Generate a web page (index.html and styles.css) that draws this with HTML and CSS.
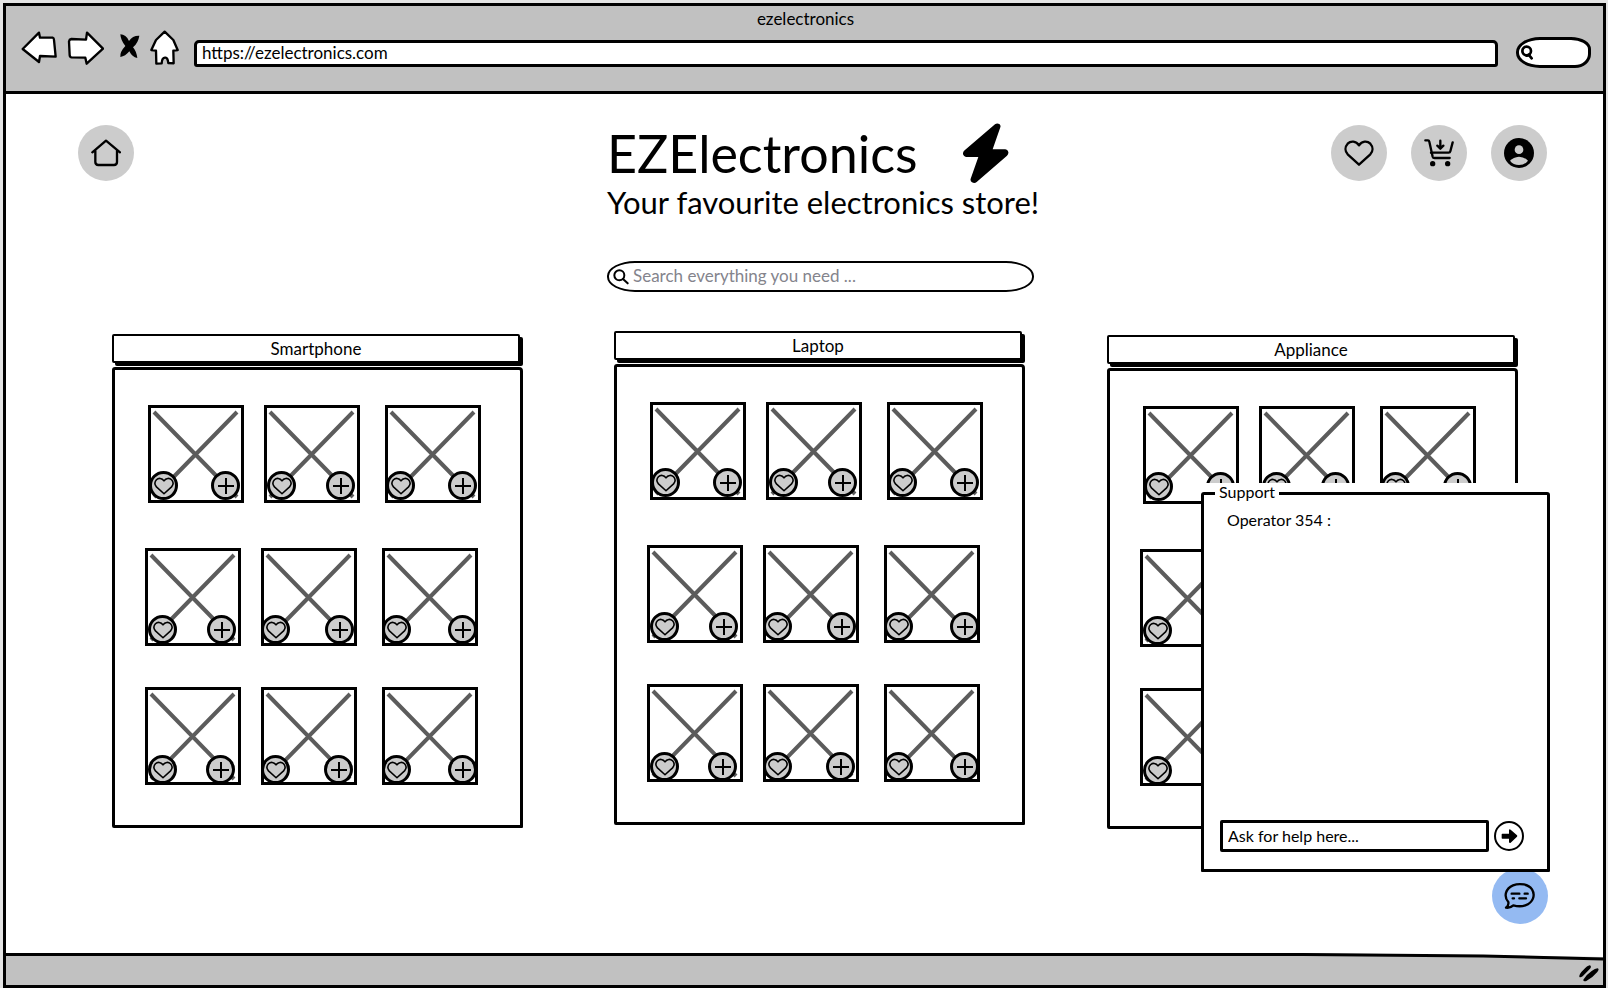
FILE: index.html
```html
<!DOCTYPE html>
<html lang="en">
<head>
<meta charset="utf-8">
<title>ezelectronics</title>
<link rel="stylesheet" href="styles.css">
</head>
<body>
<svg class="sprites" aria-hidden="true">
  <symbol id="heart" viewBox="0 0 90 78"><path d="M45 16C36 2 20 2 11 11C2 21 3 34 11 43L45 74L79 43C87 34 88 21 79 11C70 2 54 2 45 16Z" fill="none" stroke="#000" stroke-linejoin="round"/></symbol>
  <symbol id="frame" viewBox="0 0 96 98">
    <path d="M6 7L89 92M89 7L6 92" stroke="#5c5c5c" stroke-width="4" fill="none"/>
    <path d="M1.5 1.500H94.500V96.500H1.500Z" stroke="#000" stroke-width="3" fill="none"/>
  </symbol>
</svg>
<div class="window">
  <header class="chrome">
    <div class="chrome-title">ezelectronics</div>
    <div class="chrome-bar">
      <nav class="chrome-nav" aria-label="Browser">
        <button class="nav-btn back" aria-label="Back"><svg width="37" height="36" viewBox="60 90 111 108"><path d="M68 147L117 98L120 113L158 113Q162 114 162 120L167 170L120 168L117 186Z"/></svg></button>
        <button class="nav-btn forward" aria-label="Forward"><svg width="37" height="36" viewBox="201 90 111 108"><path d="M207 124Q208 118 214 117L258 119L261 98L309 146L260 191L256 173L214 172Q209 171 209 165Z"/></svg></button>
        <button class="nav-btn stop" aria-label="Stop"><svg width="21" height="26" viewBox="357 99 63 78"><path class="solid" d="M361 103Q378 103 387 123Q398 106 418 107Q415 128 399 142Q409 153 412 174Q396 171 388 154Q376 169 361 171Q359 156 376 138Q362 121 361 103Z"/></svg></button>
        <button class="nav-btn home" aria-label="Home page"><svg width="29" height="36" viewBox="450 90 87 108"><path d="M494 95L520 120L533 150L520 152L521 190L505 189Q503 172 496 173Q486 172 485 190L469 191L468 152L454 150L468 120Z"/></svg></button>
      </nav>
      <input class="url" type="text" aria-label="Address" value="https://ezelectronics.com">
      <label class="pill">
        <svg width="13" height="15" viewBox="0 0 39 45"><circle cx="17" cy="18" r="13"/><path d="M23 29L32 40M17 32L26 29"/></svg>
        <input type="text" aria-label="Browser search">
      </label>
    </div>
  </header>

  <main class="store">
    <div class="top">
      <button class="round" aria-label="Home"><svg width="30" height="28" viewBox="272 418 90 84" fill="none" stroke="#000" stroke-width="7" stroke-linecap="round" stroke-linejoin="round"><path d="M276 458L317 423L359 458M285 454V487Q285 496 294 496H341Q350 496 350 487V454"/></svg></button>
      <div class="hero">
        <div class="brand">
          <h1>EZElectronics</h1>
          <svg width="46" height="60" viewBox="1119 68 138 180"><path d="M1215 72Q1221 67 1228 71Q1233 75 1231 81L1208 147H1246Q1253 148 1255 155Q1256 161 1251 166L1160 245Q1154 250 1146 246Q1140 242 1142 235L1165 170H1128Q1121 169 1119 162Q1118 155 1124 150Z"/></svg>
        </div>
        <p class="tagline">Your favourite electronics store!</p>
        <label class="search">
          <svg width="16" height="16" viewBox="0 0 48 48" fill="none" stroke="#000" stroke-width="6" stroke-linecap="round"><circle cx="19" cy="19" r="15"/><path d="M30 30L44 43"/></svg>
          <input type="search" aria-label="Search products" placeholder="Search everything you need ...">
        </label>
      </div>
      <div class="actions">
        <button class="round" aria-label="Wishlist"><svg width="30" height="26" stroke-width="7"><use href="#heart"/></svg></button>
        <button class="round" aria-label="Cart"><svg width="30" height="28" viewBox="375 418 90 84" fill="none" stroke="#000" stroke-width="7" stroke-linecap="round" stroke-linejoin="round"><path d="M379 422H387Q390 422 391 426L401 471Q402 475 407 475H452M396 459H449Q453 459 454 455L461 428M424 423V446M415 438L424 447L433 438"/><circle cx="401" cy="492" r="4.500" fill="#000"/><circle cx="446" cy="492" r="4.500" fill="#000"/></svg></button>
        <button class="round" aria-label="Account"><svg width="30" height="30" viewBox="0 0 90 90"><circle cx="45" cy="45" r="45"/><g fill="#ccc"><circle cx="45" cy="35" r="13"/><path d="M18 68Q28 57 45 56Q62 57 72 68Q62 81 45 81Q28 81 18 68Z"/></g></svg></button>
      </div>
    </div>

    <div class="panels">
      <section class="panel"><h2>Smartphone</h2><div class="shelf"></div></section>
      <section class="panel"><h2>Laptop</h2><div class="shelf"></div></section>
      <section class="panel"><h2>Appliance</h2><div class="shelf"></div></section>
    </div>

    <button class="round chat" aria-label="Chat"><svg width="32" height="28" viewBox="972 304 96 84" fill="none" stroke="#000" stroke-width="7" stroke-linecap="round" stroke-linejoin="round"><path d="M985 364C970 347 977 323 999 314C1020 306 1046 311 1056 326C1067 344 1059 366 1036 374C1024 378 1011 377 1000 374Q990 383 978 381Q987 374 985 364Z"/><path d="M995 339H1018M1034 339H1043M998 353H1002M1018 353H1038"/></svg></button>

    <div class="support">
      <fieldset>
        <legend>Support</legend>
        <div class="talk">
          <p class="message">Operator 354 :</p>
          <form class="ask">
            <input type="text" aria-label="Message" value="Ask for help here...">
            <button type="button" class="send" aria-label="Send"><svg width="30" height="30" viewBox="0 0 90 90"><circle cx="45" cy="45" r="42" fill="#fff" stroke="#000" stroke-width="6"/><path d="M25 38H45V27Q46 23 50 26L69 43Q71 45 69 47L50 65Q46 67 45 63V53H25Q23 53 23 51V40Q23 38 25 38Z"/></svg></button>
          </form>
        </div>
      </fieldset>
    </div>
  </main>

  <footer class="status">
    <svg class="edge" height="8" viewBox="0 0 1600 8" preserveAspectRatio="none" aria-hidden="true"><path d="M0 0H1600V4L1500 2.500L1300 0Z" fill="#fff"/><path d="M0 1.500H1300L1480 3L1600 6" fill="none" stroke="#000" stroke-width="3"/></svg>
    <svg class="grip" width="20" height="17" viewBox="1199 556 60 51" aria-hidden="true"><path d="M1231 557Q1238 559 1232 567L1210 590Q1202 595 1200 591Q1199 583 1212 571Q1224 558 1231 557ZM1255 566Q1261 568 1254 577Q1241 593 1221 604Q1211 607 1212 600Q1222 584 1237 574Q1247 566 1255 566Z"/></svg>
  </footer>
</div>
<script src="app.js"></script>
</body>
</html>
```

FILE: styles.css
```css
* { box-sizing: border-box; }

body {
  margin: 0;
  background: #e4e4e4;
  color: #000;
  font: 17px/20px Lato, "Open Sans", sans-serif;
}

button { padding: 0; border: 0; background: none; cursor: pointer; }
input { min-width: 0; font: inherit; color: inherit; border: 0; outline: 0; background: none; }
svg { display: block; flex: none; }
h1, h2, p { margin: 0; font-weight: 400; }

.sprites { width: 0; height: 0; position: absolute; }

.window {
  display: flex;
  flex-direction: column;
  min-height: calc(100vh - 3px);
  margin: 3px 2px 0 3px;
  border: 3px solid #000;
  background: #fff;
}

/* browser chrome */
.chrome { padding: 0 12px 23px 14px; background: #c1c1c1; border-bottom: 3px solid #000; }
.chrome-title { height: 24px; padding-top: 3px; text-align: center; }
.chrome-bar { display: flex; align-items: flex-end; height: 38px; }
.chrome-nav { display: flex; align-items: center; gap: 10px; margin: 0 15px 2px 0; }
.nav-btn path { fill: #fff; stroke: #000; stroke-width: 7; stroke-linejoin: round; }
.nav-btn .solid { fill: #000; stroke: none; }
.nav-btn.stop { margin: 0 0 5px 5px; }

.url {
  flex: 1;
  height: 27px;
  margin: 0 18px 1px 0;
  padding: 0 5px 3px;
  background: #fff;
  border: 3px solid #000;
  border-radius: 5px 5px 3px 3px;
}

.pill {
  display: flex;
  align-items: center;
  width: 75px;
  height: 31px;
  padding-left: 2px;
  background: #fff;
  border: 3px solid #000;
  border-radius: 24px 20px 16px 24px / 15px 12px 14px 15px;
}
.pill input { width: 100%; }
.pill svg { fill: none; stroke: #000; stroke-width: 8; stroke-linecap: round; }

/* store header */
.store { position: relative; flex: 1; padding-top: 29px; }

.top {
  display: grid;
  grid-template-columns: 1fr auto 1fr;
  align-items: start;
  padding: 0 56px 0 72px;
}

.round {
  display: grid;
  place-items: center;
  width: 56px;
  height: 56px;
  margin-top: 2px;
  border-radius: 50%;
  background: #ccc;
}

.actions { display: flex; justify-content: flex-end; gap: 24px; }
.hero { width: 443px; padding-left: 16px; }
.brand { display: flex; justify-content: space-between; align-items: center; padding-right: 25px; }
h1 { font-size: 52px; line-height: 60px; }
.tagline { margin-top: 1px; font-size: 31px; line-height: 36px; white-space: nowrap; }

.search {
  display: flex;
  align-items: center;
  gap: 4px;
  height: 31px;
  margin-top: 41px;
  padding-left: 4px;
  border: 2px solid #000;
  border-radius: 28px / 15px;
}
.search input { flex: 1; padding: 0 0 2px; }
.search input::placeholder { color: #84848c; opacity: 1; }

/* category panels */
.panels {
  display: grid;
  grid-template-columns: 420fr 411fr 411fr;
  gap: 82px;
  align-items: start;
  padding: 39px 85px 60px 106px;
}
.panel:nth-child(1) { margin: 3px 9px 0 0; }
.panel:nth-child(3) { margin-top: 4px; }

h2 {
  height: 29px;
  margin: 0 3px 4px 0;
  border: 2px solid #000;
  border-radius: 2px;
  box-shadow: 3px 3px 0 #000;
  background: #fff;
  font-size: 17px;
  line-height: 26px;
  text-align: center;
}

.shelf {
  height: 461px;
  padding: 35px 30px;
  border: 3px solid #000;
  border-radius: 3px 4px 1px 2px;
}

.row { display: flex; gap: 20px; height: 98px; margin-bottom: 41px; }
.row:first-child { padding-left: 3px; margin-bottom: 45px; }

.tile { display: grid; flex: none; width: 96px; height: 98px; }
.tile:nth-child(3) { margin-left: 5px; }
.tile > * { grid-area: 1 / 1; }
.tile-actions { display: flex; justify-content: space-between; align-items: flex-end; padding: 0 4px 3px 1px; }

.row:nth-child(1) .tile:nth-child(2) .tile-actions { padding: 0 5px 3px 3px; }
.row:nth-child(2) .tile-actions { padding: 0 3px 2px 0; }
.row:nth-child(2) .tile:nth-child(1) .tile-actions { padding: 0 5px 2px 3px; }
.row:nth-child(3) .tile-actions { padding: 0 4px 1px 0; }
.row:nth-child(3) .tile:nth-child(1) .tile-actions { padding: 0 6px 1px 3px; }
.row:nth-child(n+2) .tile:nth-child(3) .tile-actions { padding-right: 1px; }

.badge {
  display: grid;
  place-items: center;
  width: 29px;
  height: 29px;
  border: 3px solid #000;
  border-radius: 50%;
  background: #ccc;
}

/* support chat */
.chat { position: absolute; right: 55px; bottom: 29px; background: #94baf2; }

.support {
  position: absolute;
  right: 53px;
  bottom: 81px;
  width: 349px;
  background: #fff;
  font-size: 16px;
}
.support fieldset {
  margin: 0;
  padding: 6px 23px 17px 16px;
  border: 3px solid #000;
  border-radius: 3px 3px 1px 1px;
}
.support legend { margin-left: -5px; padding: 0 4px 4px; line-height: 17px; }
.talk { display: flex; flex-direction: column; min-height: 342px; }
.message { flex: 1; padding-left: 7px; }
.ask { display: flex; align-items: center; gap: 5px; }
.ask input { flex: 1; height: 32px; padding: 0 5px 2px; border: 3px solid #000; border-radius: 2px; }

/* status bar */
.status { display: flex; flex-direction: column; align-items: flex-end; height: 32px; background: #c1c1c1; }
.edge { width: 100%; }
.grip { margin: 4px 4px 0 0; }
```

FILE: app.js
```js
const tile = `
  <div class="tile">
    <svg width="96" height="98"><use href="#frame"/></svg>
    <div class="tile-actions">
      <button class="badge" aria-label="Add to wishlist"><svg width="20" height="18" stroke-width="7"><use href="#heart"/></svg></button>
      <button class="badge" aria-label="Add to cart"><svg width="16" height="16" viewBox="0 0 16 16"><path d="M8 0V16M0 8H16" stroke="#000" stroke-width="2"/></svg></button>
    </div>
  </div>`;

document.querySelectorAll(".shelf").forEach((shelf) => {
  shelf.innerHTML = `<div class="row">${tile.repeat(3)}</div>`.repeat(3);
});
```
